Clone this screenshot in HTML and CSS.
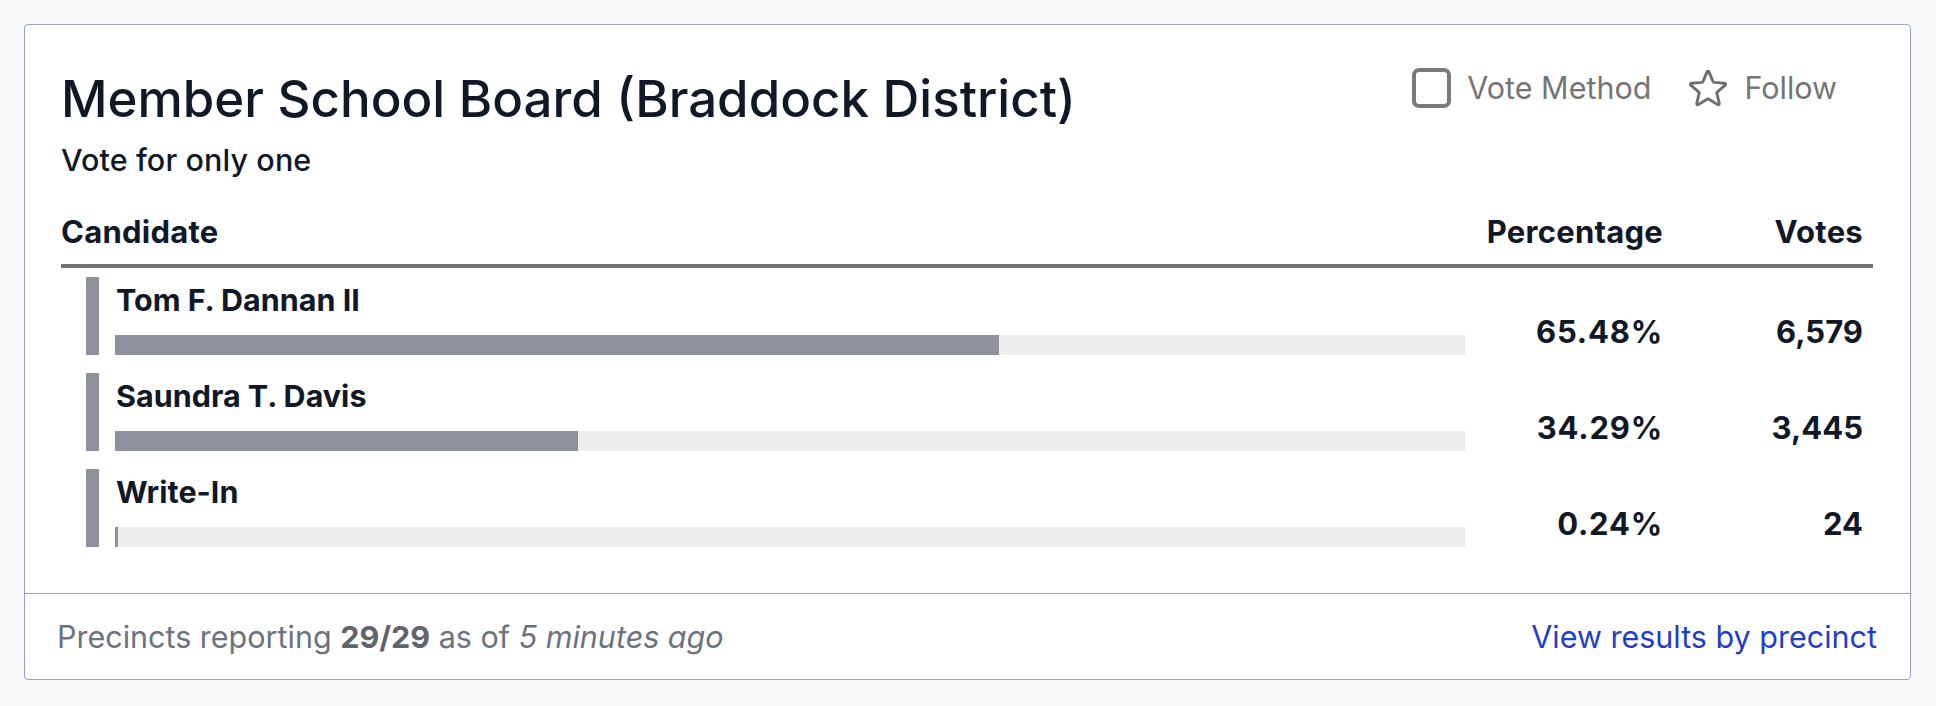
FILE: index.html
```html
<!DOCTYPE html>
<html lang="en">
<head>
<meta charset="utf-8">
<title>Member School Board (Braddock District)</title>
<link rel="stylesheet" href="styles.css">
</head>
<body>
<div class="page">
  <section class="card">
    <div class="card-body">
      <header class="head">
        <div class="head-text">
          <h1 class="title">Member School Board (Braddock District)</h1>
          <p class="subtitle">Vote for only one</p>
        </div>
        <div class="actions">
          <label class="action">
            <span class="checkbox"></span>
            <span class="action-label">Vote Method</span>
          </label>
          <button class="action action-btn" type="button">
            <svg class="star" viewBox="1.6 2.6 20.8 19.1" width="40" height="37" aria-hidden="true">
              <path d="M11.48 3.499a.562.562 0 011.04 0l2.125 5.111a.563.563 0 00.475.345l5.518.442c.499.04.701.663.321.988l-4.204 3.602a.563.563 0 00-.182.557l1.285 5.385a.562.562 0 01-.84.61l-4.725-2.885a.563.563 0 00-.586 0L6.982 20.54a.562.562 0 01-.84-.61l1.285-5.386a.562.562 0 00-.182-.557l-4.204-3.602a.563.563 0 01.321-.988l5.518-.442a.563.563 0 00.475-.345L11.48 3.5z" fill="none" stroke="currentColor" stroke-width="1.5" stroke-linejoin="round"/>
            </svg>
            <span class="action-label">Follow</span>
          </button>
        </div>
      </header>

      <div class="results">
        <div class="th th-name">Candidate</div>
        <div class="th th-num">Percentage</div>
        <div class="th th-num">Votes</div>
        <div class="rule"></div>

        <div class="cand">
          <div class="cand-name">Tom F. Dannan II</div>
          <div class="track"><div class="fill" style="width:65.48%"></div></div>
        </div>
        <div class="num num-pct">65.48%</div>
        <div class="num">6,579</div>

        <div class="cand">
          <div class="cand-name">Saundra T. Davis</div>
          <div class="track"><div class="fill" style="width:34.29%"></div></div>
        </div>
        <div class="num num-pct">34.29%</div>
        <div class="num">3,445</div>

        <div class="cand">
          <div class="cand-name">Write-In</div>
          <div class="track"><div class="fill" style="width:0.24%"></div></div>
        </div>
        <div class="num num-pct">0.24%</div>
        <div class="num">24</div>
      </div>
    </div>

    <footer class="card-foot">
      <p class="reporting">Precincts reporting <strong>29/29</strong> as of <em>5 minutes ago</em></p>
      <a class="link" href="#">View results by precinct</a>
    </footer>
  </section>
</div>
</body>
</html>
```
FILE: styles.css
```css
* { box-sizing: border-box; }

html, body {
  margin: 0;
  background: #f9f9f9;
}

body {
  font-family: Inter, "Noto Sans", "Liberation Sans", sans-serif;
  color: #111827;
}

.page {
  padding: 24px 25px 24px 24px;
}

.card {
  background: #fff;
  border: 1px solid #94a3b8;
  border-radius: 4px;
}

.card-body {
  padding: 43px 37px 28px 36px;
}

/* header */
.head {
  display: flex;
  justify-content: space-between;
  align-items: flex-start;
}

.title {
  margin: 0;
  font-size: 51px;
  line-height: 1.2;
  font-weight: 500;
}

.subtitle {
  margin: 13px 0 0;
  font-size: 30.5px;
  line-height: 36px;
  font-weight: 500;
  letter-spacing: 0.1px;
}

.actions {
  display: flex;
  align-items: center;
  gap: 37px;
  margin-right: 36px;
}

.action {
  display: flex;
  align-items: center;
  gap: 16px;
  color: #757575;
  font: inherit;
  font-size: 30.5px;
  line-height: 36px;
  cursor: pointer;
}

.action-btn {
  background: none;
  border: 0;
  padding: 0;
  color: #757575;
}

.checkbox {
  display: block;
  width: 39px;
  height: 40px;
  border: 4px solid #7a7a7a;
  border-radius: 7px;
}

.star {
  display: block;
  color: #6e6e6e;
}

/* results table */
.results {
  display: grid;
  grid-template-columns: 1fr 198px 200px;
  margin-top: 35px;
}

.th {
  font-size: 31px;
  line-height: 37px;
  font-weight: 700;
  letter-spacing: 0.25px;
  padding-bottom: 14px;
}

.th-num {
  text-align: right;
  padding-right: 10px;
}

.rule {
  grid-column: 1 / -1;
  height: 4px;
  background: #737373;
  margin-bottom: 9px;
}

.cand {
  margin: 0 10px 18px 25px;
  border-left: 13px solid #8f929a;
  padding: 5px 0 0 16px;
  height: 78px;
}

.cand-name {
  font-size: 30.5px;
  line-height: 36px;
  font-weight: 700;
  margin-left: 1px;
}

.track {
  margin-top: 17px;
  height: 20px;
  background: #ededed;
}

.fill {
  height: 100%;
  background: #8f929a;
}

.num {
  align-self: end;
  text-align: right;
  margin-bottom: 18px;
  padding: 0 10px 5px 0;
  font-size: 31px;
  line-height: 37px;
  font-weight: 700;
}

.num-pct {
  letter-spacing: 0.8px;
}

/* footer */
.card-foot {
  display: flex;
  justify-content: space-between;
  align-items: center;
  border-top: 1px solid #94a3b8;
  padding: 25px 33px 24px 32px;
  font-size: 30.5px;
  line-height: 36px;
}

.reporting {
  margin: 0;
  color: #6b7280;
}

.reporting strong {
  font-weight: 700;
  color: #5f646d;
}

.link {
  color: #1f3fc6;
  text-decoration: none;
}
```
